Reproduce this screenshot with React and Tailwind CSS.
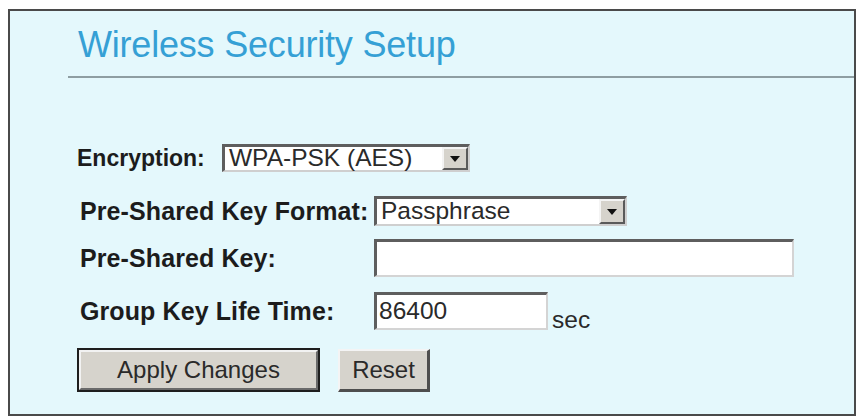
import React from "react";

function Arrow() {
  return (
    <div className="w-[26px] self-stretch bg-[#d6d3cc] border-t-[2px] border-l-[2px] border-t-[#f4f4f4] border-l-[#f4f4f4] border-b-[2px] border-r-[2px] border-b-[#5a5a5a] border-r-[#5a5a5a] flex items-center justify-center">
      <svg width="10" height="6" viewBox="0 0 10 6">
        <path d="M0 0 L10 0 L5 6 Z" fill="#111" />
      </svg>
    </div>
  );
}

function Select({ value, width, height }) {
  return (
    <div
      className={`flex bg-white border-t-[3px] border-l-[3px] border-t-[#5e5e5e] border-l-[#5e5e5e] border-b-[2px] border-r-[2px] border-b-[#cfcfcf] border-r-[#cfcfcf] ${width} ${height}`}
    >
      <div className="flex-1 flex items-center pl-[4px] text-[24.5px] leading-none text-[#2a2a2a]">
        {value}
      </div>
      <Arrow />
    </div>
  );
}

export default function App() {
  const font = { fontFamily: '"Liberation Sans", Arial, sans-serif' };
  return (
    <div className="w-[862px] h-[420px] bg-white pt-[9px] pl-[8px]" style={font}>
      <div className="w-[848px] h-[407px] border-[2px] border-[#4a4a4a] bg-[#e4f8fc] flex flex-col">
        <div className="mt-[14px] ml-[68px] text-[36px] leading-[40px] text-[#35a0d5] tracking-[-0.2px]">
          Wireless Security Setup
        </div>
        <div className="mt-[11px] ml-[58px] h-[2px] bg-[#8e9ea2]" />

        <div className="mt-[66px] ml-[67px] flex items-center h-[28px]">
          <div className="w-[145px] text-[23px] font-bold text-[#1c1c1c] leading-none">
            Encryption:
          </div>
          <Select value="WPA-PSK (AES)" width="w-[248px]" height="h-[28px]" />
        </div>

        <div className="mt-[24px] ml-[70px] flex items-center h-[30px]">
          <div className="w-[294px] text-[25px] font-bold text-[#1c1c1c] leading-none tracking-[0.1px]">
            Pre-Shared Key Format:
          </div>
          <Select value="Passphrase" width="w-[253px]" height="h-[30px]" />
        </div>

        <div className="mt-[13px] ml-[70px] flex items-center h-[38px]">
          <div className="w-[294px] text-[25px] font-bold text-[#1c1c1c] leading-none tracking-[0.1px]">
            Pre-Shared Key:
          </div>
          <div className="w-[420px] h-[38px] bg-white border-t-[3px] border-l-[3px] border-t-[#5e5e5e] border-l-[#5e5e5e] border-b-[2px] border-r-[2px] border-b-[#d4d4d4] border-r-[#d4d4d4]" />
        </div>

        <div className="mt-[15px] ml-[70px] flex items-center h-[38px]">
          <div className="w-[294px] text-[25px] font-bold text-[#1c1c1c] leading-none tracking-[0.1px]">
            Group Key Life Time:
          </div>
          <div className="w-[174px] h-[38px] bg-white border-t-[3px] border-l-[3px] border-t-[#5e5e5e] border-l-[#5e5e5e] border-b-[2px] border-r-[2px] border-b-[#d4d4d4] border-r-[#d4d4d4] flex items-center pl-[2px] text-[24.5px] leading-none text-[#2a2a2a]">
            86400
          </div>
          <div className="ml-[4px] self-end mb-[-2px] text-[24.5px] leading-none text-[#2a2a2a]">
            sec
          </div>
        </div>

        <div className="mt-[18px] ml-[67px] flex items-start">
          <div className="w-[243px] h-[44px] border-[2px] border-[#1e1e1e] bg-[#d6d3cc] flex">
            <div className="flex-1 border-t-[2px] border-l-[2px] border-t-[#f2f2f2] border-l-[#f2f2f2] border-b-[2px] border-r-[2px] border-b-[#6a6a6a] border-r-[#6a6a6a] flex items-center justify-center text-[24px] leading-none text-[#2a2a2a]">
              Apply Changes
            </div>
          </div>
          <div className="ml-[18px] mt-[1px] w-[92px] h-[43px] bg-[#d6d3cc] border-t-[2px] border-l-[2px] border-t-[#f4f4f4] border-l-[#f4f4f4] border-b-[3px] border-r-[3px] border-b-[#4e4e4e] border-r-[#4e4e4e] flex items-center justify-center text-[24px] leading-none text-[#2a2a2a]">
            Reset
          </div>
        </div>
      </div>
    </div>
  );
}
